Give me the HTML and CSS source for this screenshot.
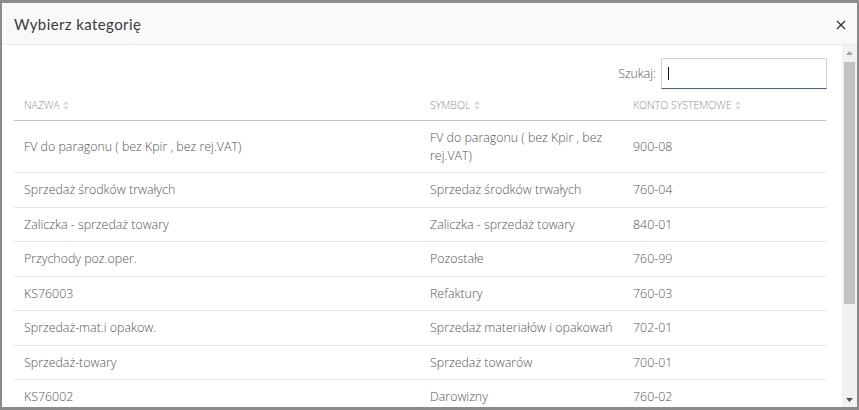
FILE: index.html
```html
<!DOCTYPE html>
<html lang="pl">
<head>
<meta charset="utf-8">
<title>Wybierz kategorię</title>
<link rel="stylesheet" href="styles.css">
</head>
<body>
<div class="backdrop">
  <div class="modal">
    <div class="modal-header">
      <h4 class="modal-title">Wybierz kategorię</h4>
      <button class="close" type="button" aria-label="Zamknij">
        <svg width="10" height="10" viewBox="0 0 10 10"><path d="M1 1 L9 9 M9 1 L1 9" stroke="#333" stroke-width="1.3" fill="none"/></svg>
      </button>
    </div>
    <div class="modal-main">
      <div class="modal-body">
        <div class="search-row">
          <label class="search-label">Szukaj:</label>
          <div class="search-box"><span class="caret"></span></div>
        </div>
        <table class="table">
          <colgroup>
            <col class="c1"><col class="c2"><col class="c3">
          </colgroup>
          <thead>
            <tr>
              <th>NAZWA <svg class="sort" width="6" height="9" viewBox="0 0 6 9"><path d="M3 0 L6 3.5 L0 3.5 Z M3 9 L6 5.5 L0 5.5 Z" fill="#d9d9d9"/></svg></th>
              <th>SYMBOL <svg class="sort" width="6" height="9" viewBox="0 0 6 9"><path d="M3 0 L6 3.5 L0 3.5 Z M3 9 L6 5.5 L0 5.5 Z" fill="#d9d9d9"/></svg></th>
              <th>KONTO SYSTEMOWE <svg class="sort" width="6" height="9" viewBox="0 0 6 9"><path d="M3 0 L6 3.5 L0 3.5 Z M3 9 L6 5.5 L0 5.5 Z" fill="#d9d9d9"/></svg></th>
            </tr>
          </thead>
          <tbody>
            <tr><td>FV do paragonu ( bez Kpir , bez rej.VAT)</td><td>FV do paragonu ( bez Kpir , bez rej.VAT)</td><td>900-08</td></tr>
            <tr><td>Sprzedaż środków trwałych</td><td>Sprzedaż środków trwałych</td><td>760-04</td></tr>
            <tr><td>Zaliczka - sprzedaż towary</td><td>Zaliczka - sprzedaż towary</td><td>840-01</td></tr>
            <tr><td>Przychody poz.oper.</td><td>Pozostałe</td><td>760-99</td></tr>
            <tr><td>KS76003</td><td>Refaktury</td><td>760-03</td></tr>
            <tr><td>Sprzedaż-mat.i opakow.</td><td>Sprzedaż materiałów i opakowań</td><td>702-01</td></tr>
            <tr><td>Sprzedaż-towary</td><td>Sprzedaż towarów</td><td>700-01</td></tr>
            <tr><td>KS76002</td><td>Darowizny</td><td>760-02</td></tr>
          </tbody>
        </table>
      </div>
      <div class="scrollbar" aria-hidden="true">
        <div class="sb-btn"><svg width="7" height="4" viewBox="0 0 7 4"><path d="M3.5 0 L7 4 L0 4 Z" fill="#a3a3a3"/></svg></div>
        <div class="sb-track"><div class="sb-thumb"></div></div>
        <div class="sb-btn"><svg width="7" height="4" viewBox="0 0 7 4"><path d="M0 0 L7 0 L3.5 4 Z" fill="#505050"/></svg></div>
      </div>
    </div>
  </div>
</div>
</body>
</html>
```

FILE: styles.css
```css
* { box-sizing: border-box; }
html, body { margin: 0; padding: 0; }
body {
  width: 859px;
  height: 410px;
  overflow: hidden;
  background: #8b8b8b;
  font-family: "Open Sans", "Liberation Sans", sans-serif;
}
.backdrop {
  width: 859px;
  height: 410px;
  padding: 3px 2px 3px 2px;
}
.modal {
  width: 855px;
  height: 404px;
  background: #fff;
  display: flex;
  flex-direction: column;
  overflow: hidden;
}
.modal-header {
  flex: 0 0 42px;
  background: #f9f9f9;
  border-bottom: 1px solid #e9e9e9;
  display: flex;
  align-items: center;
  justify-content: space-between;
  padding: 0 11px 0 12px;
}
.modal-title {
  margin: 0;
  font-family: "Lato", "Noto Sans", sans-serif;
  font-weight: 400;
  font-size: 15px;
  color: #3a3a3a;
  letter-spacing: 0.4px;
  padding-top: 1px;
}
.close {
  border: 0;
  background: transparent;
  padding: 0;
  width: 10px;
  height: 10px;
  display: flex;
  margin-top: 3px;
}
.modal-main {
  flex: 1 1 auto;
  display: flex;
  min-height: 0;
}
.modal-body {
  flex: 1 1 auto;
  overflow: hidden;
  padding: 13px 15px 0 12px;
}
.scrollbar {
  flex: 0 0 15px;
  background: #f1f1f1;
  display: flex;
  flex-direction: column;
}
.sb-btn {
  flex: 0 0 15px;
  display: flex;
  align-items: center;
  justify-content: center;
}
.sb-track {
  flex: 1 1 auto;
  padding: 2px 2px 88px 2px;
  display: flex;
}
.sb-thumb {
  flex: 1 1 auto;
  background: #c1c1c1;
}
.search-row {
  display: flex;
  justify-content: flex-end;
  align-items: center;
  gap: 5px;
  height: 31px;
}
.search-label {
  font-size: 12.3px;
  font-weight: 300;
  color: #555;
}
.search-box {
  width: 166px;
  height: 31px;
  border: 1px solid #d2d2d2;
  border-bottom: 1px solid #2b6aa3;
  display: flex;
  align-items: center;
  padding-left: 6px;
}
.caret {
  display: block;
  width: 1px;
  height: 13px;
  background: #111;
}
.table {
  width: 812px;
  border-collapse: collapse;
  table-layout: fixed;
}
.c1 { width: 406px; }
.c2 { width: 203px; }
.c3 { width: 203px; }
th {
  text-align: left;
  font-size: 10.5px;
  font-weight: 300;
  color: #8f8f8f;
  padding: 8px 10px 7px 10px;
  line-height: 16px;
  border-bottom: 1px solid #c4c4c4;
  white-space: nowrap;
}
.sort { margin-left: 1px; vertical-align: -1px; }
td {
  font-size: 12.4px;
  font-weight: 300;
  color: #555;
  line-height: 17.5px;
  padding: 8px 10px;
  border-bottom: 1px solid #e4e4e4;
  vertical-align: middle;
}
```
